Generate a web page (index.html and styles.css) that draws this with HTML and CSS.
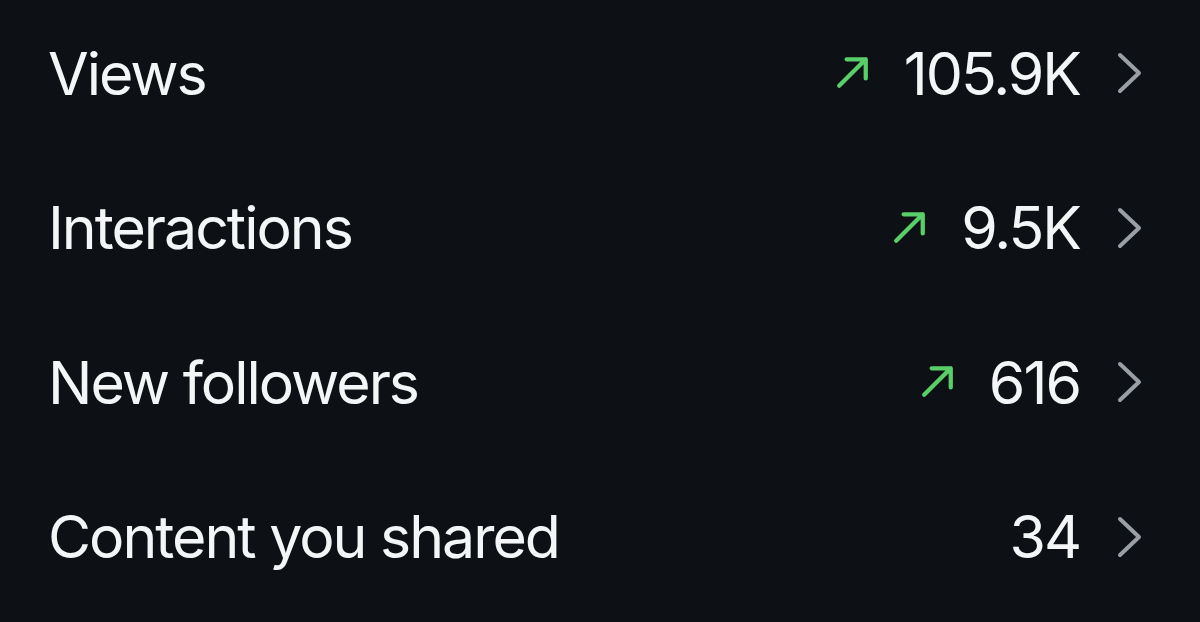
FILE: index.html
```html
<!DOCTYPE html>
<html>
<head>
<meta charset="utf-8">
<link rel="stylesheet" href="styles.css">
</head>
<body>
<ul class="stats">
  <li class="row">
    <span class="label">Views</span>
    <span class="value">
      <svg class="trend" viewBox="0 0 32 32"><path d="M3 29 L28 4 M10 4 H28 V22"/></svg>
      <span class="num">105.9K</span>
      <svg class="chev" viewBox="0 0 26 42"><path d="M4 3 L23 21 L4 39"/></svg>
    </span>
  </li>
  <li class="row">
    <span class="label">Interactions</span>
    <span class="value">
      <svg class="trend" viewBox="0 0 32 32"><path d="M3 29 L28 4 M10 4 H28 V22"/></svg>
      <span class="num">9.5K</span>
      <svg class="chev" viewBox="0 0 26 42"><path d="M4 3 L23 21 L4 39"/></svg>
    </span>
  </li>
  <li class="row">
    <span class="label">New followers</span>
    <span class="value">
      <svg class="trend" viewBox="0 0 32 32"><path d="M3 29 L28 4 M10 4 H28 V22"/></svg>
      <span class="num">616</span>
      <svg class="chev" viewBox="0 0 26 42"><path d="M4 3 L23 21 L4 39"/></svg>
    </span>
  </li>
  <li class="row">
    <span class="label">Content you shared</span>
    <span class="value">
      <span class="num">34</span>
      <svg class="chev" viewBox="0 0 26 42"><path d="M4 3 L23 21 L4 39"/></svg>
    </span>
  </li>
</ul>
</body>
</html>
```

FILE: styles.css
```css
html, body {
  margin: 0;
  padding: 0;
  background: #0d1014;
  height: 100%;
  overflow: hidden;
}
body {
  font-family: Inter, "Liberation Sans", sans-serif;
  color: #f4f5f6;
}
.stats {
  list-style: none;
  margin: -4px 0 0 0;
  padding: 0 58px 0 48px;
}
.row {
  height: 154.5px;
  display: flex;
  align-items: center;
  justify-content: space-between;
}
.label {
  font-size: 59px;
  letter-spacing: -2px;
}
.value {
  display: flex;
  align-items: center;
}
.num {
  font-size: 59px;
  letter-spacing: -2px;
  margin-right: 36px;
}
.trend {
  width: 34px;
  height: 34px;
  margin-right: 34px;
  margin-top: -2px;
}
.trend path {
  fill: none;
  stroke: #58cf69;
  stroke-width: 4;
  stroke-linecap: round;
  stroke-linejoin: round;
}
.chev {
  width: 26px;
  height: 42px;
}
.chev path {
  fill: none;
  stroke: #9a9ea5;
  stroke-width: 4;
  stroke-linecap: round;
  stroke-linejoin: round;
}
```
